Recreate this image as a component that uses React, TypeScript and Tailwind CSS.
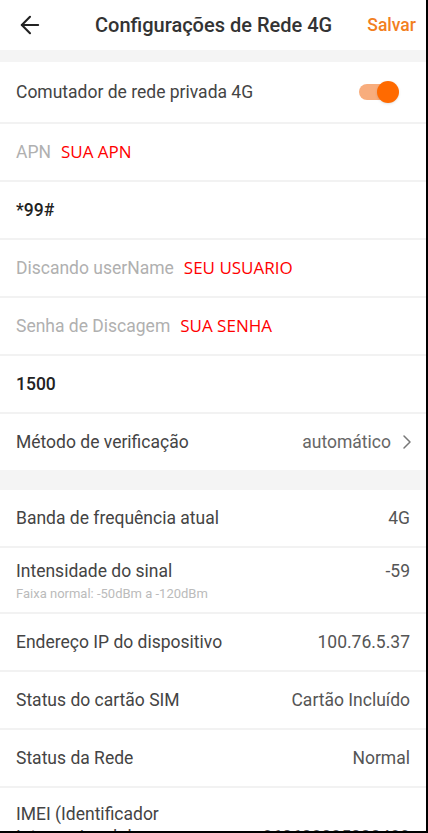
import React, { useState } from "react";
import { ArrowLeft, ChevronRight } from "lucide-react";

const inputRows = [
  { label: "APN", note: "SUA APN" },
  { value: "*99#" },
  { label: "Discando userName", note: "SEU USUARIO" },
  { label: "Senha de Discagem", note: "SUA SENHA" },
  { value: "1500" },
];

const statusRows = [
  { label: "Endereço IP do dispositivo", value: "100.76.5.37" },
  { label: "Status do cartão SIM", value: "Cartão Incluído" },
  { label: "Status da Rede", value: "Normal" },
];

export default function App() {
  const [enabled, setEnabled] = useState(true);

  return (
    <div
      className="w-[428px] h-[833px] overflow-hidden bg-white border-r-2 border-b-2 border-black text-[17.5px]"
      style={{ fontFamily: "Roboto, 'Noto Sans', sans-serif" }}
    >
      {/* Header */}
      <header className="h-[50px] flex items-center pl-[16px] pr-[10px]">
        <ArrowLeft size={28} strokeWidth={1.8} className="text-[#222]" />
        <h1 className="text-[20px] font-medium text-[#333] ml-[51px]">
          Configurações de Rede 4G
        </h1>
        <button className="ml-auto text-[17.5px] font-medium text-[#f2801f]">
          Salvar
        </button>
      </header>

      <div className="h-[12px] bg-[#f4f4f4]" />

      {/* Toggle row */}
      <div className="h-[62px] flex items-center justify-between pl-[16px] pr-[31px] border-b-2 border-[#f2f2f2]">
        <span className="text-[#444]">Comutador de rede privada 4G</span>
        <button
          onClick={() => setEnabled(!enabled)}
          className="relative w-[36px] h-[16px] rounded-full bg-[#f8ad7d]"
          aria-label="toggle"
        >
          <span className="absolute right-[-4px] top-[-3px] w-[22px] h-[22px] rounded-full bg-[#ff6a00] shadow-sm" />
        </button>
      </div>

      {inputRows.map((row, i) => (
        <div
          key={i}
          className="h-[58px] flex items-center px-[16px] border-b-2 border-[#f2f2f2]"
        >
          {row.label ? (
            <>
              <span className="text-[#b0b0b0]">{row.label}</span>
              <span
                className="ml-[10px] text-[17px] text-[#ff0000]"
                style={{ fontFamily: "'Open Sans', sans-serif" }}
              >
                {row.note}
              </span>
            </>
          ) : (
            <span className="font-medium text-[#222]">{row.value}</span>
          )}
        </div>
      ))}

      <div className="h-[56px] flex items-center justify-between px-[16px]">
        <span className="text-[#444]">Método de verificação</span>
        <span className="flex items-center gap-[4px] text-[#666] mr-[-9px]">
          automático
          <ChevronRight size={24} strokeWidth={1.5} className="text-[#777]" />
        </span>
      </div>

      <div className="h-[20px] bg-[#f4f4f4]" />

      {/* Status section */}
      <div className="h-[58px] flex items-center justify-between px-[16px] border-b-2 border-[#f2f2f2]">
        <span className="text-[#444]">Banda de frequência atual</span>
        <span className="text-[#555]">4G</span>
      </div>

      <div className="h-[66px] flex justify-between pt-[13px] px-[16px] border-b-2 border-[#f2f2f2]">
        <div className="flex flex-col">
          <span className="text-[#444] leading-[21px]">Intensidade do sinal</span>
          <span className="text-[13px] text-[#bbb] mt-[2px]">
            Faixa normal: -50dBm a -120dBm
          </span>
        </div>
        <span className="text-[#555] leading-[21px]">-59</span>
      </div>

      {statusRows.map((row) => (
        <div
          key={row.label}
          className="h-[58px] flex items-center justify-between px-[16px] border-b-2 border-[#f2f2f2]"
        >
          <span className="text-[#444]">{row.label}</span>
          <span className="text-[#555]">{row.value}</span>
        </div>
      ))}

      <div className="flex items-center justify-between pt-[15px] px-[16px]">
        <span className="text-[#444] leading-[23px] w-[200px]">
          IMEI (Identificador Internacional de Equipamento Móvel)
        </span>
        <span className="text-[#555]">860603035000489</span>
      </div>
    </div>
  );
}
